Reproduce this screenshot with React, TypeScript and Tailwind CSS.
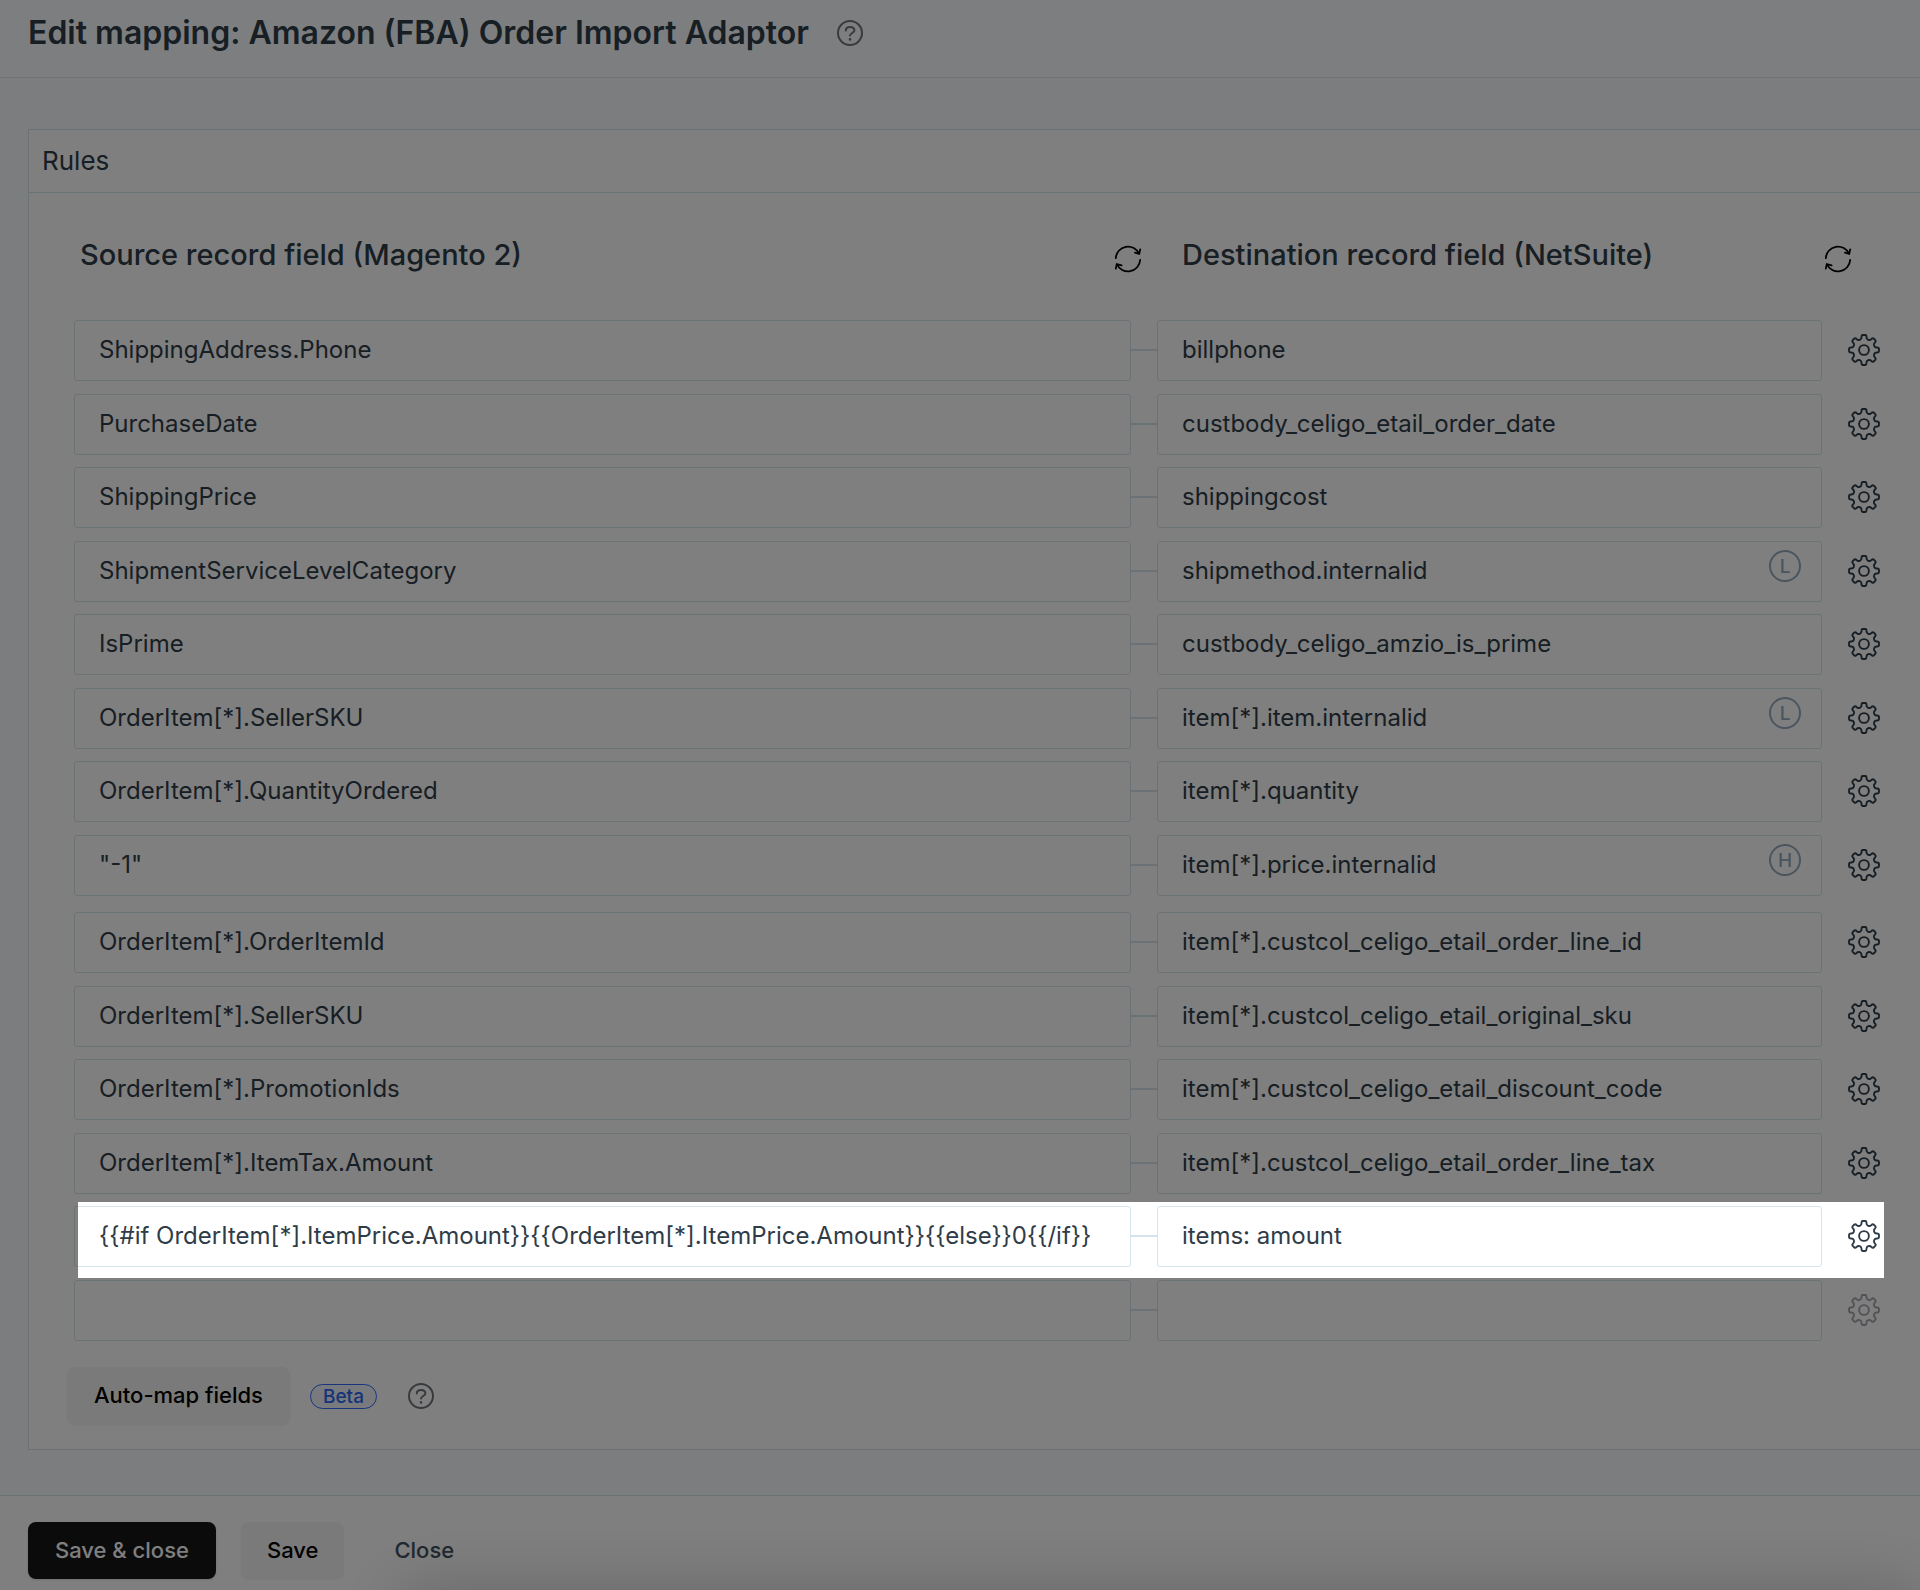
import React from "react";

type Badge = "L" | "H";
type Mapping = { source: string; dest: string; badge?: Badge; active?: boolean; empty?: boolean };

const headerMappings: Mapping[] = [
  { source: "ShippingAddress.Phone", dest: "billphone" },
  { source: "PurchaseDate", dest: "custbody_celigo_etail_order_date" },
  { source: "ShippingPrice", dest: "shippingcost" },
  { source: "ShipmentServiceLevelCategory", dest: "shipmethod.internalid", badge: "L" },
  { source: "IsPrime", dest: "custbody_celigo_amzio_is_prime" },
  { source: "OrderItem[*].SellerSKU", dest: "item[*].item.internalid", badge: "L" },
  { source: "OrderItem[*].QuantityOrdered", dest: "item[*].quantity" },
  { source: '"-1"', dest: "item[*].price.internalid", badge: "H" },
];

const lineMappings: Mapping[] = [
  { source: "OrderItem[*].OrderItemId", dest: "item[*].custcol_celigo_etail_order_line_id" },
  { source: "OrderItem[*].SellerSKU", dest: "item[*].custcol_celigo_etail_original_sku" },
  { source: "OrderItem[*].PromotionIds", dest: "item[*].custcol_celigo_etail_discount_code" },
  { source: "OrderItem[*].ItemTax.Amount", dest: "item[*].custcol_celigo_etail_order_line_tax" },
  {
    source: "{{#if OrderItem[*].ItemPrice.Amount}}{{OrderItem[*].ItemPrice.Amount}}{{else}}0{{/if}}",
    dest: "items: amount",
    active: true,
  },
  { source: "", dest: "", empty: true },
];

/* Outline of an eight-toothed gear on a 32px grid. */
function gearPath(): string {
  const cx = 16;
  const cy = 16;
  const at = (r: number, deg: number) => {
    const a = (deg * Math.PI) / 180;
    return `${(cx + r * Math.sin(a)).toFixed(2)} ${(cy - r * Math.cos(a)).toFixed(2)}`;
  };
  let d = "";
  for (let i = 0; i < 8; i++) {
    const t = i * 45;
    d += `${i === 0 ? "M" : "L"}${at(13, t - 11)}`;
    d += `Q${at(15, t - 10)} ${at(15, t - 5)}`;
    d += `L${at(15, t + 5)}`;
    d += `Q${at(15, t + 10)} ${at(13, t + 11)}`;
    d += `C${at(10.6, t + 13)} ${at(10.6, t + 32)} ${at(13, t + 34)}`;
  }
  return d + "Z";
}
const GEAR = gearPath();

function GearIcon() {
  return (
    <svg viewBox="0 0 32 32" className="size-8" fill="none" stroke="currentColor" strokeWidth="1.9" strokeLinejoin="round" aria-hidden="true">
      <path d={GEAR} />
      <circle cx="16" cy="16" r="4.9" />
    </svg>
  );
}

function RefreshIcon() {
  return (
    <svg viewBox="0 0 28 28" className="size-7" fill="none" stroke="currentColor" strokeWidth="1.8" strokeLinecap="round" strokeLinejoin="round" aria-hidden="true">
      <path d="M1.8 13.2A12.2 12.2 0 0 1 25.2 9M26.2 4.4L25.2 9L21 7.6" />
      <path d="M26.2 14.8A12.2 12.2 0 0 1 2.8 19M1.8 23.6L2.8 19L7.6 20.4" />
    </svg>
  );
}

function HelpIcon() {
  return (
    <svg viewBox="0 0 28 28" className="size-7" fill="none" stroke="currentColor" strokeWidth="2" strokeLinecap="round" aria-hidden="true">
      <circle cx="14" cy="14" r="12" />
      <path d="M9.8 11.4C9.8 9.2 11.6 7.9 14 7.9S18.4 9.2 18.4 11.4C18.4 14 14 14 14 16.6" />
      <circle cx="14" cy="20.4" r="0.7" fill="currentColor" strokeWidth="1.2" />
    </svg>
  );
}

const fieldClass =
  "h-[61px] w-full rounded-[3px] border border-[#d6e4ed] bg-white px-6 pb-0.5 text-2xl leading-8 text-[#2f3c48] outline-none";

function MappingRow({ row, label }: { row: Mapping; label: string }) {
  return (
    <li className="relative flex items-center odd:mb-[13px] even:mb-3">
      <input aria-label={`Source field ${label}`} defaultValue={row.source} className={fieldClass} />
      <span className="mb-0.5 h-0.5 w-[26px] shrink-0 bg-[#d6e4ed]" />
      <div className="relative w-[665px] shrink-0">
        <input aria-label={`Destination field ${label}`} defaultValue={row.dest} className={fieldClass} />
        {row.badge && (
          <span className="absolute top-[9px] right-[21px] flex size-8 items-center justify-center rounded-full border-2 border-[#94aabf] text-[19px] leading-none font-medium text-[#94aabf]">
            {row.badge}
          </span>
        )}
      </div>
      <button
        type="button"
        aria-label={`Settings ${label}`}
        disabled={row.empty}
        className="mb-0.5 ml-[26px] shrink-0 text-[#2f3c48] disabled:text-[#a2a7ac]"
      >
        <GearIcon />
      </button>
      {row.active && (
        <span className="pointer-events-none absolute -top-1 -right-1 -bottom-[11px] left-1 z-10 shadow-[0_0_0_3000px_rgba(0,0,0,0.5)]" />
      )}
    </li>
  );
}

export default function App() {
  return (
    <main className="flex min-h-screen flex-col overflow-hidden bg-[#f7fafe] font-['Inter',sans-serif] text-[#2f3c48]">
      <header className="flex h-[78px] items-center gap-[27px] border-b border-[#dfe6ec] bg-[#fbfcfe] px-7 pb-3">
        <h1 className="text-[32px] leading-10 font-semibold">Edit mapping: Amazon (FBA) Order Import Adaptor</h1>
        <button type="button" aria-label="Help" className="text-[#70757b]">
          <HelpIcon />
        </button>
      </header>

      <section className="mt-[51px] ml-7 border border-r-0 border-[#d6e4ed] bg-white">
        <h2 className="border-b border-[#d6e4ed] px-[13px] py-[15px] text-[26px] leading-8">Rules</h2>
        <div className="flex flex-col pt-10 pr-10 pb-6 pl-[45px]">
          <div className="flex items-start">
            <div className="flex flex-1 items-center justify-between pl-1.5">
              <h3 className="text-[29px] leading-[44px] font-medium">Source record field (Magento 2)</h3>
              <button type="button" aria-label="Refresh source fields" className="mt-2 mr-10 text-black">
                <RefreshIcon />
              </button>
            </div>
            <div className="flex w-[698px] items-center justify-between">
              <h3 className="text-[29px] leading-[44px] font-medium">Destination record field (NetSuite)</h3>
              <button type="button" aria-label="Refresh destination fields" className="mt-2 mr-7 text-black">
                <RefreshIcon />
              </button>
            </div>
          </div>

          <ul className="mt-[43px]">
            {headerMappings.map((row, i) => (
              <MappingRow key={i} row={row} label={`${i + 1}`} />
            ))}
          </ul>
          <ul className="mt-1">
            {lineMappings.map((row, i) => (
              <MappingRow key={i} row={row} label={`${i + 9}`} />
            ))}
          </ul>

          <div className="mt-3.5 -ml-[7px] flex items-center">
            <button type="button" className="h-[58px] rounded-lg bg-[#f5f5f5] px-[27px] pb-0.5 text-[22px] font-medium text-black shadow-xs">
              Auto-map fields
            </button>
            <span className="ml-5 rounded-full border border-[#2f6bff] bg-[#f0f5fd] px-3 text-[19px] leading-[23px] font-medium text-[#2f66f0]">
              Beta
            </span>
            <button type="button" aria-label="About auto-mapping" className="ml-[30px] text-[#70757b]">
              <HelpIcon />
            </button>
          </div>
        </div>
      </section>

      <footer className="relative mt-auto flex h-[95px] items-start overflow-hidden border-t border-[#d6e4ed] bg-white px-7 pt-[26px]">
        <button type="button" className="h-[57px] rounded-lg bg-[#171717] px-[27px] text-[22px] font-medium text-white shadow-sm">
          Save &amp; close
        </button>
        <button type="button" className="ml-[25px] h-[57px] rounded-lg bg-[#f5f5f5] px-[26px] text-[22px] font-medium text-black shadow-xs">
          Save
        </button>
        <button type="button" className="ml-[26px] h-[57px] px-6 text-[22px] font-medium text-[#42505e]">
          Close
        </button>
        <span className="pointer-events-none absolute top-full right-0 left-[400px] h-24 shadow-[0_0_70px_rgba(0,0,0,0.2)]" />
      </footer>
    </main>
  );
}
